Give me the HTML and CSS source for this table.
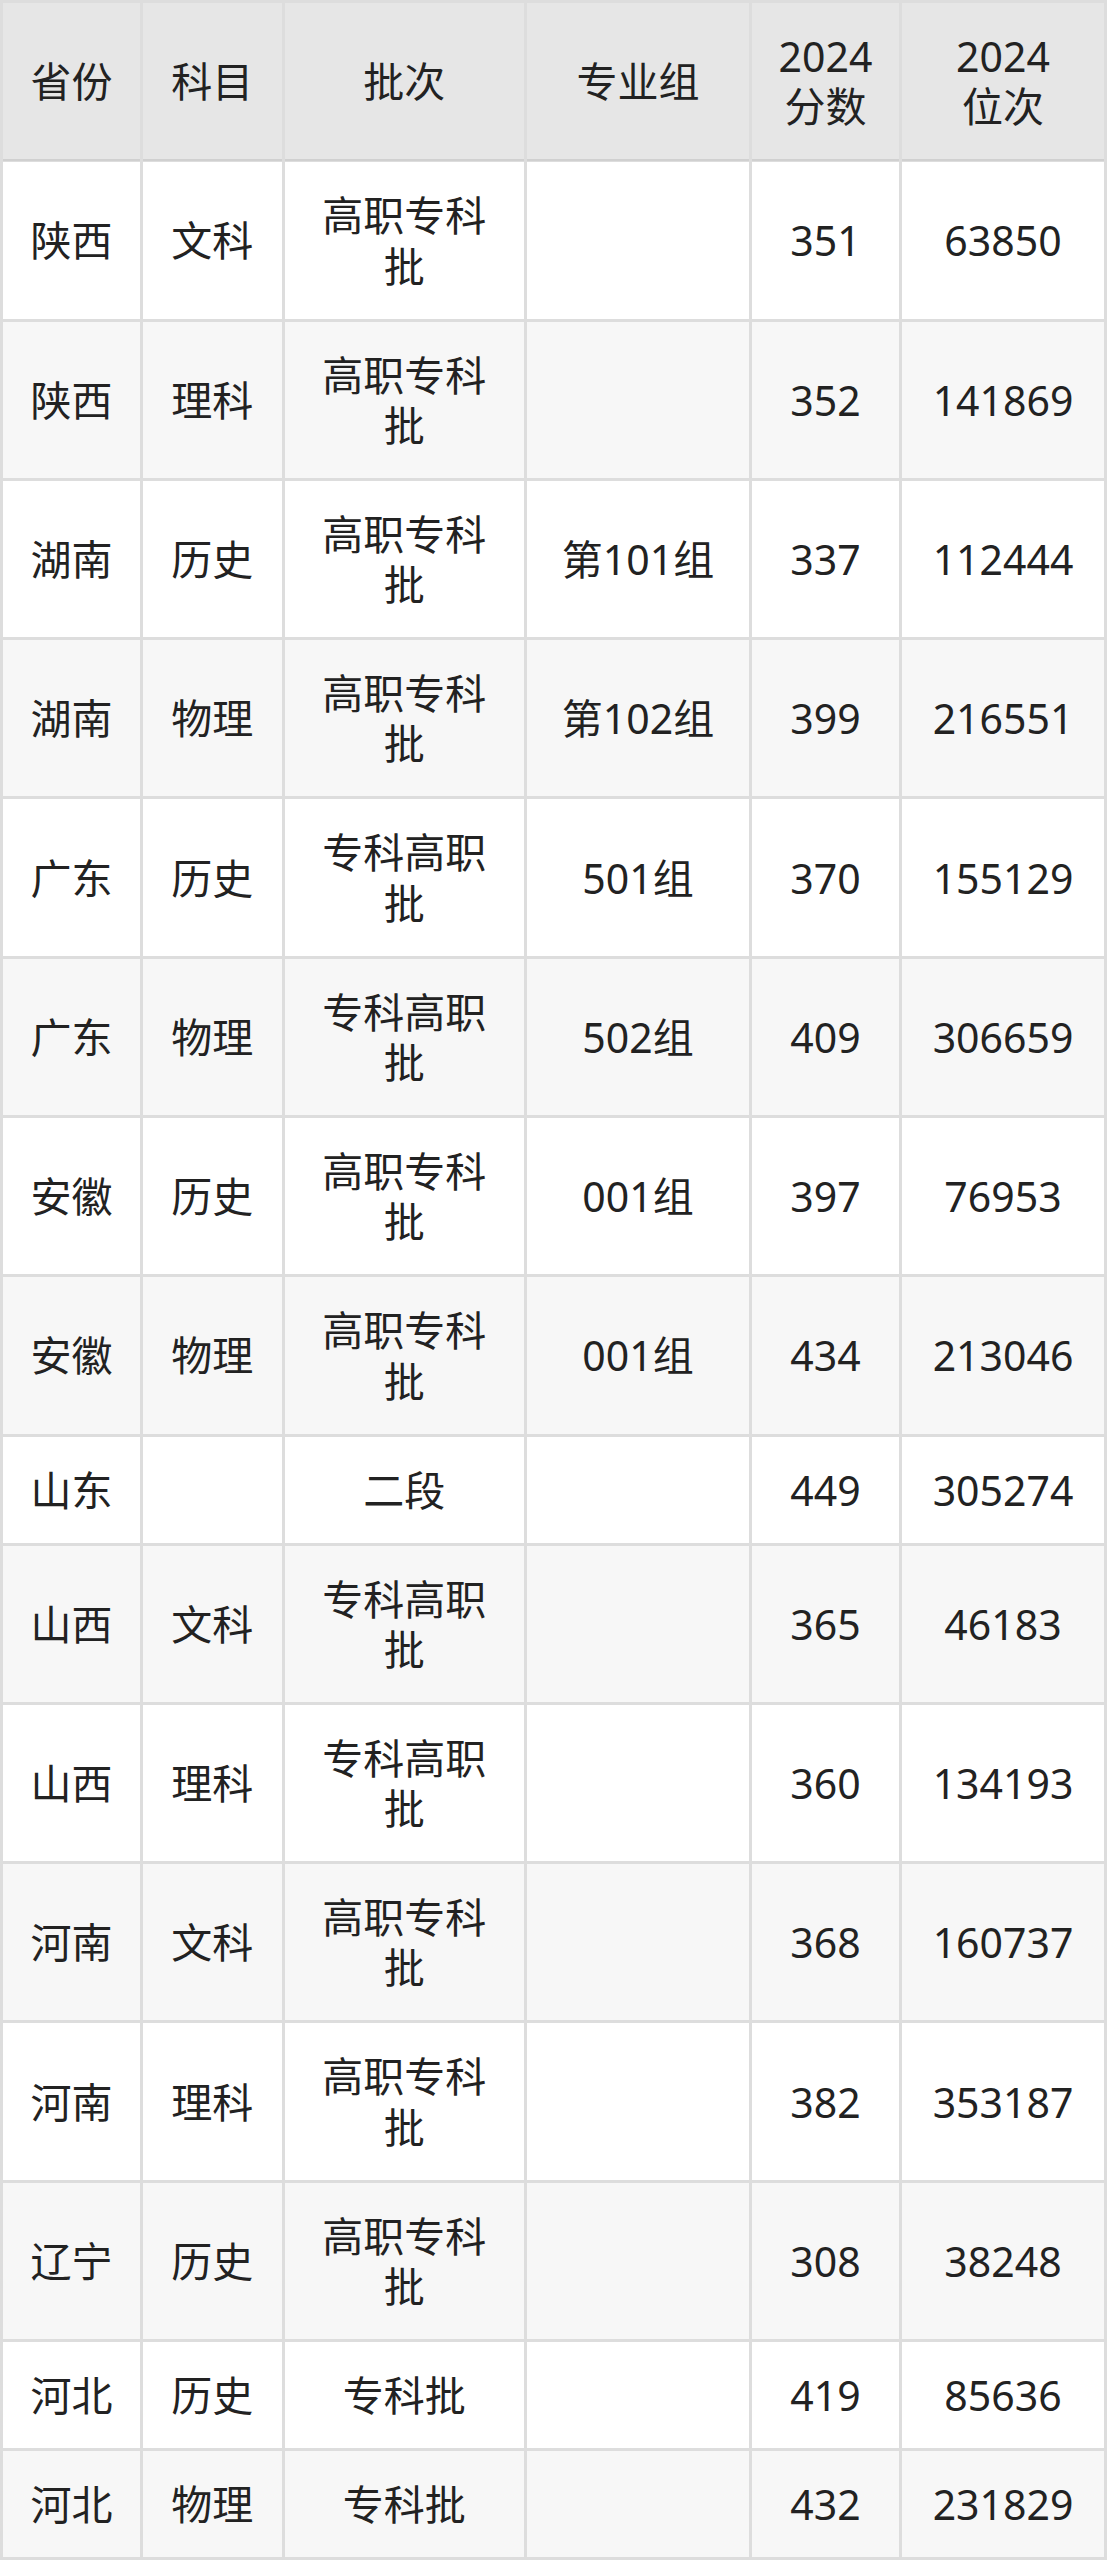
FILE: index.html
```html
<!DOCTYPE html>
<html lang="zh-CN">
<head>
<meta charset="utf-8">
<title>2024 分数 位次</title>
<link rel="stylesheet" href="styles.css">
</head>
<body>
<table class="score-table">
  <colgroup>
    <col class="c-prov">
    <col class="c-subj">
    <col class="c-batch">
    <col class="c-group">
    <col class="c-score">
    <col class="c-rank">
  </colgroup>
  <thead>
    <tr>
      <th>省份</th>
      <th>科目</th>
      <th>批次</th>
      <th>专业组</th>
      <th>2024<br>分数</th>
      <th>2024<br>位次</th>
    </tr>
  </thead>
  <tbody>
    <tr><td>陕西</td><td>文科</td><td>高职专科批</td><td></td><td>351</td><td>63850</td></tr>
    <tr><td>陕西</td><td>理科</td><td>高职专科批</td><td></td><td>352</td><td>141869</td></tr>
    <tr><td>湖南</td><td>历史</td><td>高职专科批</td><td>第101组</td><td>337</td><td>112444</td></tr>
    <tr><td>湖南</td><td>物理</td><td>高职专科批</td><td>第102组</td><td>399</td><td>216551</td></tr>
    <tr><td>广东</td><td>历史</td><td>专科高职批</td><td>501组</td><td>370</td><td>155129</td></tr>
    <tr><td>广东</td><td>物理</td><td>专科高职批</td><td>502组</td><td>409</td><td>306659</td></tr>
    <tr><td>安徽</td><td>历史</td><td>高职专科批</td><td>001组</td><td>397</td><td>76953</td></tr>
    <tr><td>安徽</td><td>物理</td><td>高职专科批</td><td>001组</td><td>434</td><td>213046</td></tr>
    <tr><td>山东</td><td></td><td>二段</td><td></td><td>449</td><td>305274</td></tr>
    <tr><td>山西</td><td>文科</td><td>专科高职批</td><td></td><td>365</td><td>46183</td></tr>
    <tr><td>山西</td><td>理科</td><td>专科高职批</td><td></td><td>360</td><td>134193</td></tr>
    <tr><td>河南</td><td>文科</td><td>高职专科批</td><td></td><td>368</td><td>160737</td></tr>
    <tr><td>河南</td><td>理科</td><td>高职专科批</td><td></td><td>382</td><td>353187</td></tr>
    <tr><td>辽宁</td><td>历史</td><td>高职专科批</td><td></td><td>308</td><td>38248</td></tr>
    <tr><td>河北</td><td>历史</td><td>专科批</td><td></td><td>419</td><td>85636</td></tr>
    <tr><td>河北</td><td>物理</td><td>专科批</td><td></td><td>432</td><td>231829</td></tr>
  </tbody>
</table>
</body>
</html>
```

FILE: styles.css
```css
html, body {
  margin: 0;
  padding: 0;
  background: #ffffff;
}

body {
  font-family: "Noto Sans", "Noto Sans CJK SC", sans-serif;
  color: #222222;
}

.score-table {
  table-layout: fixed;
  width: 1107px;
  border-collapse: separate;
  border-spacing: 3px;
  background: #dddddd;
  font-size: 41px;
  line-height: 50.3px;
}

.c-prov { width: 137px; }
.c-subj { width: 138.5px; }
.c-batch { width: 239.5px; }
.c-group { width: 222px; }
.c-score { width: 147px; }
.c-rank { width: 202px; }

.score-table th,
.score-table td {
  padding: 28px 20px 27.7px;
  text-align: center;
  vertical-align: middle;
  font-weight: normal;
}

.score-table th {
  background: #e6e6e6;
  box-shadow: 0 2px 0 #d0d0d0;
}

.score-table tbody tr:nth-child(odd) td {
  background: #ffffff;
}

.score-table tbody tr:nth-child(even) td {
  background: #f7f7f7;
}
```
